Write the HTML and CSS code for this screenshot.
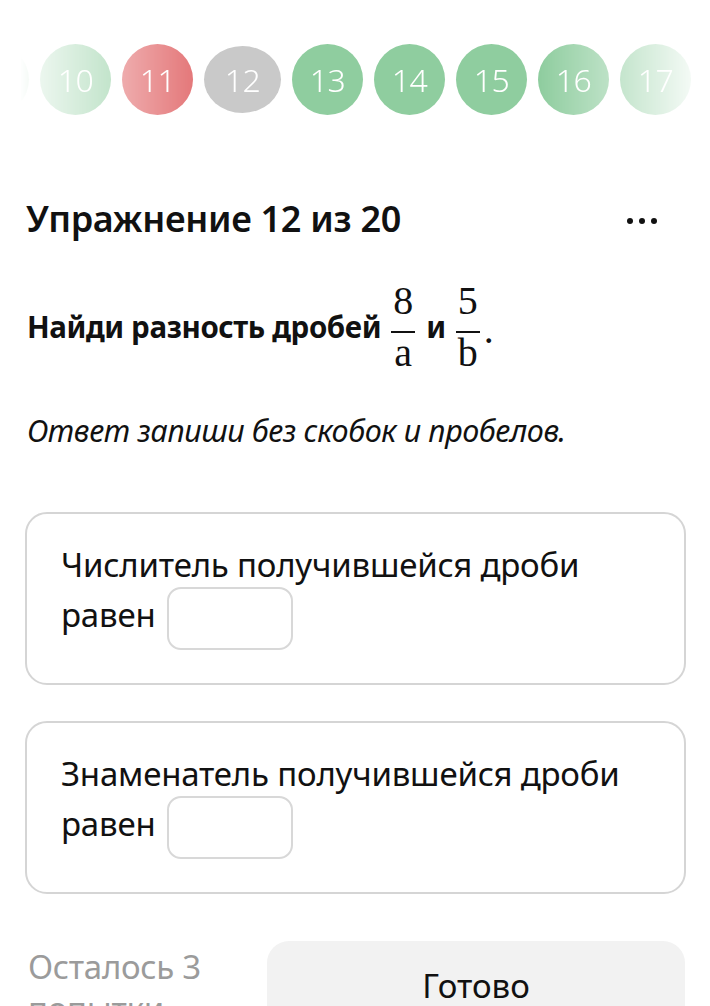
FILE: index.html
```html
<!DOCTYPE html>
<html lang="ru">
<head>
<meta charset="utf-8">
<title>Упражнение 12 из 20</title>
<link rel="stylesheet" href="styles.css">
</head>
<body>
<div class="tabs">
  <div class="tabs-track">
    <div class="tab green">9</div>
    <div class="tab green">10</div>
    <div class="tab red">11</div>
    <div class="tab gray current">12</div>
    <div class="tab green">13</div>
    <div class="tab green">14</div>
    <div class="tab green">15</div>
    <div class="tab green">16</div>
    <div class="tab green">17</div>
  </div>
</div>

<main class="page">
  <div class="header">
    <h1 class="title">Упражнение 12 из 20</h1>
    <div class="more" aria-label="Ещё"><span></span><span></span><span></span></div>
  </div>

  <div class="prompt">
    <span class="prompt-text">Найди разность дробей</span>
    <span class="frac"><span class="num">8</span><span class="bar"></span><span class="den">a</span></span>
    <span class="prompt-text">и</span>
    <span class="frac"><span class="num">5</span><span class="bar"></span><span class="den">b</span></span><span class="dot">.</span>
  </div>

  <p class="hint">Ответ запиши без скобок и пробелов.</p>

  <div class="card">
    <p class="card-text">Числитель получившейся дроби равен <span class="answer"></span></p>
  </div>
  <div class="card">
    <p class="card-text">Знаменатель получившейся дроби равен <span class="answer"></span></p>
  </div>

  <div class="footer">
    <div class="attempts">Осталось 3 попытки</div>
    <div class="done">Готово</div>
  </div>
</main>
</body>
</html>
```
FILE: styles.css
```css
html, body {
  margin: 0;
  padding: 0;
  background: #ffffff;
}
body {
  font-family: "Noto Sans", "Open Sans", sans-serif;
  color: #111111;
  overflow: hidden;
}

/* ---- tabs ---- */
.tabs {
  padding-top: 43px;
  height: 72px;
  overflow: hidden;
  -webkit-mask-image: linear-gradient(90deg, rgba(0,0,0,0) 0px, rgba(0,0,0,0) 20px, rgba(0,0,0,.15) 36px, #000 200px, #000 540px, rgba(0,0,0,0) 708px);
  mask-image: linear-gradient(90deg, rgba(0,0,0,0) 0px, rgba(0,0,0,0) 20px, rgba(0,0,0,.15) 36px, #000 200px, #000 540px, rgba(0,0,0,0) 708px);
}
.tabs-track {
  display: flex;
  align-items: center;
  gap: 11px;
  margin-left: -42px;
  height: 72px;
}
.tab {
  flex: 0 0 71px;
  height: 71px;
  border-radius: 50%;
  display: flex;
  align-items: center;
  justify-content: center;
  color: #ffffff;
  font-size: 32px;
  font-weight: 300;
  letter-spacing: -0.5px;
}
.tab.current {
  flex-basis: 77px;
  height: 67px;
}
.green { background: #8fcd9f; }
.red { background: #e37375; }
.gray { background: #c9c9c9; }

/* ---- content ---- */
.page {
  padding: 0 24px 0 25px;
}
.header {
  display: flex;
  align-items: center;
  justify-content: space-between;
  margin-top: 82px;
}
.title {
  margin: 0 0 0 1px;
  font-size: 36px;
  line-height: 44px;
  font-weight: 600;
  letter-spacing: -0.3px;
  color: #111111;
}
.more {
  display: flex;
  gap: 6px;
  margin-right: 29px;
  margin-top: 4px;
}
.more span {
  width: 6px;
  height: 6px;
  border-radius: 50%;
  background: #111111;
}

.prompt {
  display: flex;
  align-items: center;
  margin-top: 40px;
  padding-left: 2px;
}
.prompt-text {
  font-size: 29.5px;
  line-height: 40px;
  font-weight: 700;
  letter-spacing: -0.4px;
  color: #111111;
}
.frac {
  display: inline-flex;
  flex-direction: column;
  align-items: stretch;
  margin: 0 11px 0 10px;
  font-family: "Liberation Serif", "DejaVu Serif", serif;
  font-size: 40px;
  color: #111111;
}
.num, .den {
  display: block;
  text-align: center;
  line-height: 40px;
  padding: 0 2px;
}
.num { padding-bottom: 10px; }
.bar {
  display: block;
  height: 1.6px;
  background: #111111;
}
.dot {
  font-family: "Liberation Serif", serif;
  font-size: 40px;
  line-height: 40px;
  margin-left: -7px;
  margin-top: 6px;
}

.hint {
  margin: 37px 0 0 2px;
  font-size: 30.5px;
  line-height: 40px;
  font-style: italic;
  letter-spacing: -0.4px;
  color: #111111;
}

.card {
  margin-top: 62px;
  border: 2px solid #d5d5d5;
  border-radius: 22px;
  padding: 28px 30px 33px 34px;
}
.card + .card {
  margin-top: 36px;
}
.card-text {
  margin: 0;
  font-size: 33px;
  line-height: 45px;
  letter-spacing: -0.2px;
  color: #111111;
}
.answer {
  display: inline-block;
  width: 122px;
  height: 59px;
  border: 2px solid #d8d8d8;
  border-radius: 14px;
  vertical-align: middle;
  margin-left: 3px;
}

.footer {
  display: flex;
  gap: 25px;
  margin-top: 47px;
}
.attempts {
  flex: 0 0 214px;
  padding-left: 3px;
  padding-top: 5px;
  font-size: 33px;
  line-height: 42px;
  color: #9b9b9b;
  letter-spacing: -0.3px;
}
.done {
  flex: 1;
  height: 120px;
  background: #f2f2f2;
  border-radius: 22px;
  text-align: center;
  padding-top: 22px;
  font-size: 33px;
  line-height: 46px;
  color: #111111;
  margin-right: 1px;
}
```
